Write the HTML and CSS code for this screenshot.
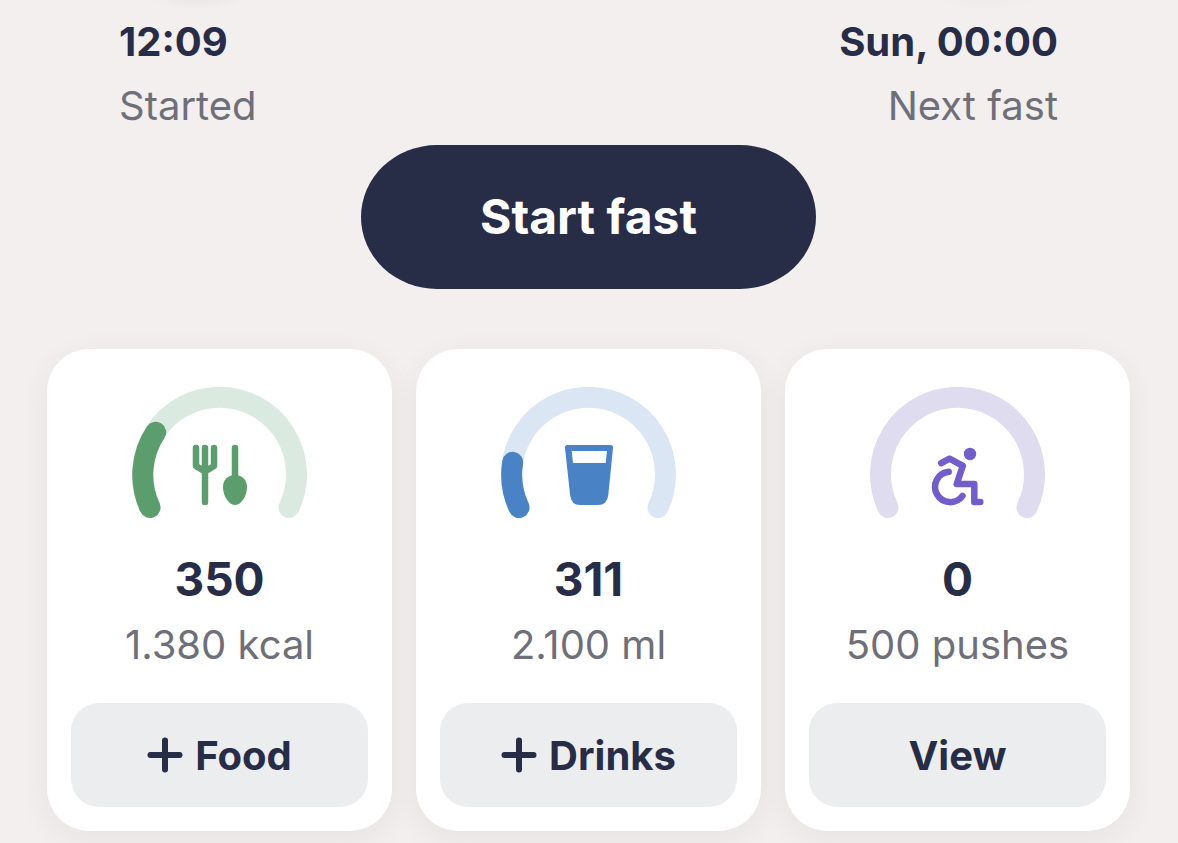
FILE: index.html
```html
<!DOCTYPE html>
<html lang="en">
<head>
    <meta charset="UTF-8">
    <meta name="viewport" content="width=device-width, initial-scale=1.0">
    <title>Fasting</title>
    <link rel="stylesheet" href="styles.css">
</head>
<body>
    <main class="page">
        <section class="times">
            <div class="time">
                <p class="time-value">12:09</p>
                <p class="label">Started</p>
            </div>
            <div class="time time-next">
                <p class="time-value">Sun, 00:00</p>
                <p class="label">Next fast</p>
            </div>
        </section>

        <button class="start-btn" type="button">Start fast</button>

        <section class="cards">
            <article class="card food">
                <svg class="gauge" viewBox="0.5 -0.5 175 132" aria-hidden="true">
                    <path class="track" d="M18.5 120A77 77 0 1 1 157.5 120"/>
                    <path class="progress" d="M18.5 120A77 77 0 0 1 24.2 44.8"/>
                    <!-- fork -->
                    <path class="line" d="M64.5 60.5V78.5L73.5 84L82.5 78.5V60.5M73.5 60.5V114.5"/>
                    <!-- spoon -->
                    <path class="line" d="M103.5 60.5V92"/>
                    <path class="fill" d="M103.5 87.5C111 87.5 115.5 92.5 115.5 99.5C115.5 108 110 117.5 103.5 117.5C97 117.5 91.5 108 91.5 99.5C91.5 92.5 96 87.5 103.5 87.5Z"/>
                </svg>
                <p class="value">350</p>
                <p class="label">1.380 kcal</p>
                <button class="card-btn" type="button">
                    <svg class="plus" viewBox="0 0 36 36" aria-hidden="true"><path d="M18 3.5V32.5M3.5 18H32.5"/></svg>
                    Food
                </button>
            </article>

            <article class="card drinks">
                <svg class="gauge" viewBox="0.5 -0.5 175 132" aria-hidden="true">
                    <path class="track" d="M18.5 120A77 77 0 1 1 157.5 120"/>
                    <path class="progress" d="M18.5 120A77 77 0 0 1 12.2 74.8"/>
                    <!-- glass -->
                    <path class="fill" fill-rule="evenodd" d="M67 57.5H110Q112.8 57.5 112.5 60.5L107.8 107.5Q106.6 117.5 97.6 117.5H79.6Q70.6 117.5 69.6 107.5L64.5 60.5Q64.2 57.5 67 57.5ZM71.2 63.4L72.5 75.5H105.2L106.5 63.4Z"/>
                </svg>
                <p class="value">311</p>
                <p class="label">2.100 ml</p>
                <button class="card-btn" type="button">
                    <svg class="plus" viewBox="0 0 36 36" aria-hidden="true"><path d="M18 3.5V32.5M3.5 18H32.5"/></svg>
                    Drinks
                </button>
            </article>

            <article class="card pushes">
                <svg class="gauge" viewBox="0.5 -0.5 175 132" aria-hidden="true">
                    <path class="track" d="M18.5 120A77 77 0 1 1 157.5 120"/>
                    <!-- wheelchair -->
                    <circle class="fill" cx="100.5" cy="66.5" r="6.2"/>
                    <path class="line" d="M71.8 75.6L80 71.2L93.3 78.4L87.2 96.5H104.8V114.5H110.8"/>
                    <path class="line" d="M79.2 84.3A15.2 15.2 0 1 0 93 108.4"/>
                </svg>
                <p class="value">0</p>
                <p class="label">500 pushes</p>
                <button class="card-btn" type="button">View</button>
            </article>
        </section>
    </main>
</body>
</html>
```

FILE: styles.css
```css
* {
    margin: 0;
    padding: 0;
    box-sizing: border-box;
}

body {
    background-color: #f2efee;
    background-image:
        radial-gradient(50px 10px at 198px 0, rgba(0, 0, 0, 0.03), transparent),
        radial-gradient(50px 10px at calc(100% - 192px) 0, rgba(0, 0, 0, 0.02), transparent);
    background-repeat: no-repeat;
    color: #272c47;
    font-family: Inter, Lato, sans-serif;
}

.page {
    display: flex;
    flex-direction: column;
    align-items: center;
    padding: 10px 48px 12px 47px;
}

.times {
    display: flex;
    justify-content: space-between;
    width: 100%;
    padding: 0 72px;
}

.time-next {
    text-align: right;
}

.time-value {
    font-size: 40px;
    font-weight: 700;
    line-height: 64px;
}

.label {
    color: #6e6f78;
    font-size: 40px;
    line-height: 64px;
}

.start-btn {
    width: 42%;
    margin-top: 7px;
    padding: 42px 24px;
    border: none;
    border-radius: 76px / 72px;
    background-color: #272c47;
    color: white;
    font-family: inherit;
    font-size: 48px;
    font-weight: 700;
    line-height: 60px;
    cursor: pointer;
}

.cards {
    display: grid;
    grid-template-columns: repeat(3, 1fr);
    gap: 24px;
    width: 100%;
    margin-top: 60px;
}

.card {
    display: flex;
    flex-direction: column;
    align-items: center;
    padding: 38px 24px 24px;
    border-radius: 42px;
    background-color: white;
    box-shadow: 0 8px 32px rgba(60, 40, 40, 0.06);
}

.gauge {
    width: 175px;
    height: 132px;
}

.gauge path {
    fill: none;
    stroke-linecap: round;
    stroke-linejoin: round;
}

.gauge .track,
.gauge .progress {
    stroke-width: 21;
}

.gauge .line {
    stroke: currentColor;
    stroke-width: 6.5;
}

.gauge .progress {
    stroke: currentColor;
}

.gauge .fill {
    fill: currentColor;
}

.food .gauge {
    color: #5b9d6c;
}

.food .track {
    stroke: #dbeae1;
}

.drinks .gauge {
    color: #4983c5;
}

.drinks .track {
    stroke: #dae6f3;
}

.pushes .gauge {
    color: #735dcb;
}

.pushes .track {
    stroke: #e0dcef;
}

.value {
    margin-top: 26px;
    font-size: 46px;
    font-weight: 700;
    line-height: 68px;
}

.card-btn {
    display: flex;
    align-items: center;
    justify-content: center;
    gap: 12px;
    width: 100%;
    height: 104px;
    margin-top: 26px;
    border: none;
    border-radius: 28px;
    background-color: #ecedef;
    color: #272c47;
    font-family: inherit;
    font-size: 40px;
    font-weight: 700;
    cursor: pointer;
}

.plus {
    width: 36px;
    height: 36px;
    fill: none;
    stroke: currentColor;
    stroke-width: 6;
    stroke-linecap: round;
}
```
